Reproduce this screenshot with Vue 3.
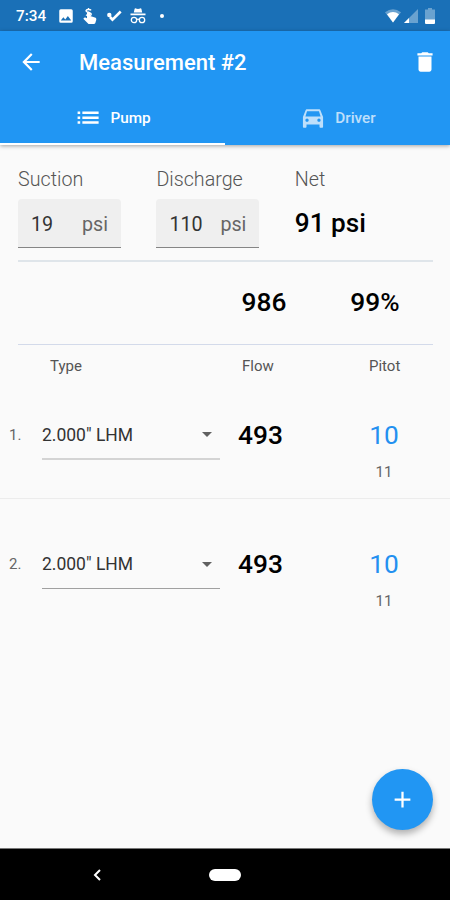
<template>
  <div class="screen">
    <div class="status-bar">
      <span class="clock">7:34</span>
      <svg class="status-image" viewBox="0 0 24 24"><path d="M21 19V5a2 2 0 0 0-2-2H5a2 2 0 0 0-2 2v14a2 2 0 0 0 2 2h14a2 2 0 0 0 2-2zM8.500 13.500l2.500 3 3.500-4.500 4.500 6H5z" /></svg>
      <svg class="status-touch" viewBox="0 0 14 16">
        <path d="M4 5.200a1.500 1.500 0 0 1 3.200 0V8l4.700 1.500c1.100.4 1.600 1.200 1.400 2.200l-.9 3.100c-.2.700-.6 1.200-1.300 1.200H6.200c-.5 0-.9-.2-1.200-.6L.3 10.700l1-1c.3-.3.700-.4 1.100-.2L4 10.300z" />
        <path d="M8 2.400C7.400 1.100 3.200 1 3 2.900c-.1 1.900 5.200 1.100 5.200 3.300 0 1.600-3.800 1.800-5.100.5M5.500 0v2M5.500 6.500v2" fill="none" stroke="#fff" stroke-width="1.500" />
      </svg>
      <svg class="status-check" viewBox="0 0 15 13">
        <path d="M3 7 5.500 9.700 13.700 1.500" fill="none" stroke="#fff" stroke-width="2.600" />
        <circle cx="2.300" cy="5" r="2.200" />
      </svg>
      <svg class="status-incognito" viewBox="0 0 16 16">
        <path d="M4.500 1.200c.1-.7.700-1 1.300-.8L8 1 10.200.4c.6-.2 1.200.1 1.300.8L12.200 4.500H3.800zM.5 5.500h15v1.700H.5z" />
        <g fill="none" stroke="#fff" stroke-width="1.300">
          <circle cx="4" cy="12" r="2.700" />
          <circle cx="12" cy="12" r="2.700" />
          <path d="M6.700 11.500q1.300-.9 2.600 0" />
        </g>
      </svg>
      <span class="status-dot"></span>
      <span class="spacer"></span>
      <svg class="status-wifi" viewBox="0 0 16 14">
        <path d="M8 13.500 0 3.300Q8-2.700 16 3.300z" opacity=".35" />
        <path d="M8 13.500 2 5.200Q8 1 14 5.200z" />
      </svg>
      <svg class="status-signal" viewBox="0 0 14 14">
        <path d="M0 14 14 0v14z" opacity=".35" />
        <path d="M0 14 5 9v5z" />
      </svg>
      <svg class="status-battery" viewBox="0 0 10 16">
        <path d="M3 0h4v1.500h3V12H0V1.500h3z" opacity=".35" />
        <path d="M0 11.500h10V15a1 1 0 0 1-1 1H1a1 1 0 0 1-1-1z" />
      </svg>
    </div>

    <header class="app-bar">
      <div class="toolbar">
        <svg class="back" viewBox="0 0 24 24"><path d="M20 11H7.830l5.590-5.590L12 4l-8 8 8 8 1.410-1.410L7.830 13H20v-2z" /></svg>
        <h1>Measurement #2</h1>
        <svg class="delete" viewBox="0 0 24 24"><path d="M6 19c0 1.100.9 2 2 2h8c1.100 0 2-.9 2-2V7H6v12zM19 4h-3.500l-1-1h-5l-1 1H5v2h14V4z" /></svg>
      </div>
      <nav class="tabs">
        <button
          v-for="tab in tabs"
          :key="tab.name"
          :class="['tab', { active: tab.name === activeTab }]"
          @click="activeTab = tab.name"
        >
          <svg viewBox="0 0 24 24"><path :d="tab.icon" /></svg>
          <span>{{ tab.name }}</span>
        </button>
      </nav>
    </header>

    <main>
      <section class="pressures">
        <div v-for="field in fields" :key="field.label" class="field">
          <label>{{ field.label }}</label>
          <div class="input">
            <span class="value">{{ field.value }}</span>
            <span class="unit">psi</span>
          </div>
        </div>
        <div class="field">
          <label>Net</label>
          <strong>91 psi</strong>
        </div>
      </section>

      <section class="totals">
        <span class="total-flow">986</span>
        <span class="total-percent">99%</span>
      </section>

      <div class="head">
        <span class="head-type">Type</span>
        <span class="head-flow">Flow</span>
        <span class="head-pitot">Pitot</span>
      </div>

      <div v-for="(row, index) in rows" :key="index" class="row">
        <span class="number">{{ index + 1 }}.</span>
        <div class="select">
          <span>{{ row.type }}</span>
          <i class="caret"></i>
        </div>
        <span class="flow">{{ row.flow }}</span>
        <div class="pitot">
          <span class="pitot-value">{{ row.pitot }}</span>
          <span class="pitot-hint">{{ row.hint }}</span>
        </div>
      </div>

      <button class="fab">
        <svg viewBox="0 0 24 24"><path d="M19 13h-6v6h-2v-6H5v-2h6V5h2v6h6z" /></svg>
      </button>
    </main>

    <footer class="nav-bar">
      <svg class="nav-back" viewBox="0 0 8 12"><path d="M7 1 2 6l5 5" fill="none" stroke="#fff" stroke-width="2" /></svg>
      <span class="home"></span>
    </footer>
  </div>
</template>

<script setup>
import { ref } from 'vue';

const activeTab = ref('Pump');

const tabs = [
  {
    name: 'Pump',
    icon: 'M2.400 6h2.400v2.400H2.400zM2.400 10.500h2.400v2.400H2.400zM2.400 15h2.400v2.400H2.400zM6.800 6h15v2.400h-15zM6.800 10.500h15v2.400h-15zM6.800 15h15v2.400h-15z',
  },
  {
    name: 'Driver',
    icon: 'M18.920 5.010C18.720 4.420 18.160 4 17.500 4h-11c-.66 0-1.210.42-1.420 1.010L2.700 11v9c0 .55.45 1 1 1H5c.55 0 1-.45 1-1v-2h12v2c0 .55.45 1 1 1h1.300c.55 0 1-.45 1-1v-9l-2.380-5.990zM6.500 15.500c-.83 0-1.500-.67-1.500-1.500s.67-1.500 1.500-1.500S8 13.170 8 14s-.67 1.500-1.500 1.500zm11 0c-.83 0-1.500-.67-1.500-1.500s.67-1.500 1.500-1.500 1.500.67 1.500 1.500-.67 1.500-1.500 1.500zM5 10.500l1.500-4.700h11l1.500 4.700H5z',
  },
];

const fields = [
  { label: 'Suction', value: 19 },
  { label: 'Discharge', value: 110 },
];

const rows = [
  { type: '2.000" LHM', flow: 493, pitot: 10, hint: 11 },
  { type: '2.000" LHM', flow: 493, pitot: 10, hint: 11 },
];
</script>

<style>
body {
  margin: 0;
}
</style>

<style scoped>
.screen {
  display: flex;
  flex-direction: column;
  width: 450px;
  height: 900px;
  overflow: hidden;
  background: #fafafa;
  color: #000;
  font-family: Roboto, "Liberation Sans", sans-serif;
}

svg {
  display: block;
  flex-shrink: 0;
  fill: #fff;
}

button {
  padding: 0;
  border: 0;
  background: none;
  font-family: inherit;
}

/* Status bar */
.status-bar {
  display: flex;
  align-items: center;
  box-sizing: border-box;
  height: 31px;
  padding: 1px 15px 0 16px;
  background: #1a70b7;
}

.clock {
  width: 41px;
  color: #fff;
  font-size: 15.300px;
  font-weight: 500;
}

.status-image {
  width: 18px;
  height: 18px;
}

.status-touch {
  width: 14px;
  height: 16px;
  margin-left: 8px;
}

.status-check {
  width: 15px;
  height: 13px;
  margin-left: 10px;
}

.status-incognito {
  width: 16px;
  height: 16px;
  margin-left: 8px;
}

.status-dot {
  width: 4px;
  height: 4px;
  margin-left: 14px;
  border-radius: 50%;
  background: #fff;
}

.spacer {
  flex: 1;
}

.status-wifi {
  width: 16px;
  height: 14px;
}

.status-signal {
  width: 14px;
  height: 14px;
  margin: 0 7px 0 3px;
}

.status-battery {
  width: 10px;
  height: 16px;
}

/* App bar */
.app-bar {
  z-index: 1;
  height: 114px;
  background: #2196f3;
  box-shadow: 0 1px 4px rgba(0, 0, 0, 0.35);
}

.toolbar {
  display: flex;
  align-items: center;
  height: 61px;
  padding: 0 12px 0 18px;
}

.back {
  width: 26px;
  height: 26px;
}

h1 {
  flex: 1;
  margin: 2px 0 0 35px;
  color: #fff;
  font-size: 22px;
  font-weight: 500;
  line-height: 26px;
}

.delete {
  width: 26px;
  height: 26px;
}

.tabs {
  display: flex;
}

.tab {
  display: flex;
  flex: 1;
  align-items: center;
  justify-content: center;
  box-sizing: border-box;
  height: 53px;
  padding-top: 1px;
  padding-left: 1px;
  border-bottom: 2px solid transparent;
  color: #fff;
  font-size: 15.300px;
  font-weight: 500;
  opacity: 0.7;
}

.tab.active {
  border-color: #fff;
  opacity: 1;
}

.tab svg {
  width: 26px;
  height: 26px;
  margin-right: 9px;
}

/* Content */
main {
  position: relative;
  flex: 1;
}

.pressures {
  display: flex;
  box-sizing: border-box;
  height: 117px;
  margin: 0 17px 0 18px;
  padding-top: 23px;
  border-bottom: 2px solid #dfe5ea;
}

.field {
  width: 103px;
  margin-right: 35.400px;
}

.field:last-child {
  margin-right: 0;
}

label {
  display: block;
  height: 31px;
  color: #555;
  font-size: 19.700px;
  font-weight: 300;
  line-height: 24px;
}

.input {
  display: flex;
  justify-content: space-between;
  box-sizing: border-box;
  height: 49px;
  padding: 0 13px 0 13px;
  border-bottom: 1px solid #858585;
  border-radius: 4px 4px 0 0;
  background: #efefef;
  font-size: 19.700px;
  line-height: 51px;
}

.value {
  color: #333;
}

.unit {
  color: #666;
}

strong {
  font-size: 26.200px;
  font-weight: 500;
  line-height: 48px;
  white-space: nowrap;
}

.totals {
  display: flex;
  box-sizing: border-box;
  height: 83px;
  margin: 0 17px 0 18px;
  padding-left: 197px;
  border-bottom: 1px solid #d3daea;
  font-size: 26.300px;
  font-weight: 500;
  line-height: 80px;
}

.total-flow {
  flex-shrink: 0;
  width: 98px;
  text-align: center;
}

.total-percent {
  flex-shrink: 0;
  width: 124px;
  text-align: center;
}

.head {
  display: flex;
  height: 44px;
  padding-left: 50px;
  color: #555;
  font-size: 15px;
  line-height: 43px;
}

.head-type {
  width: 192px;
}

.head-flow {
  width: 127px;
}

.row {
  display: flex;
  box-sizing: border-box;
  height: 110px;
  padding: 20px 0 0 9px;
  border-bottom: 1px solid #ececec;
}

.row + .row {
  height: 129px;
  padding-top: 39px;
  border-bottom: 0;
}

.number {
  width: 33px;
  color: #666;
  font-size: 15px;
  line-height: 52px;
}

.select {
  display: flex;
  align-items: center;
  justify-content: space-between;
  box-sizing: border-box;
  width: 178px;
  height: 51px;
  padding: 2px 8px 0 0;
  border-bottom: 2px solid #d4d4d4;
  color: #333;
  font-size: 17.500px;
}

.row + .row .select {
  border-bottom: 1px solid #a0a0a0;
}

.caret {
  border: 5px solid transparent;
  border-top-color: #616161;
  border-bottom: 0;
}

.flow {
  width: 80px;
  margin-left: 18px;
  font-size: 26.300px;
  font-weight: 500;
  line-height: 52px;
}

.pitot {
  display: flex;
  flex-direction: column;
  width: 132px;
  text-align: center;
}

.pitot-value {
  color: #2390f0;
  font-size: 26.300px;
  line-height: 52px;
}

.pitot-hint {
  color: #666;
  font-size: 15px;
  line-height: 22px;
}

.fab {
  position: absolute;
  right: 17px;
  bottom: 18px;
  display: flex;
  align-items: center;
  justify-content: center;
  width: 61px;
  height: 61px;
  border-radius: 50%;
  background: #2196f3;
  box-shadow: 0 4px 7px rgba(0, 0, 0, 0.3);
}

.fab svg {
  width: 27px;
  height: 27px;
}

/* System navigation */
.nav-bar {
  display: flex;
  align-items: center;
  box-sizing: border-box;
  height: 52px;
  padding-left: 93px;
  border-top: 1px solid #777;
  background: #000;
}

.nav-back {
  width: 8px;
  height: 12px;
}

.home {
  width: 32px;
  height: 12px;
  margin-left: 108px;
  border-radius: 6px;
  background: #fff;
}
</style>
